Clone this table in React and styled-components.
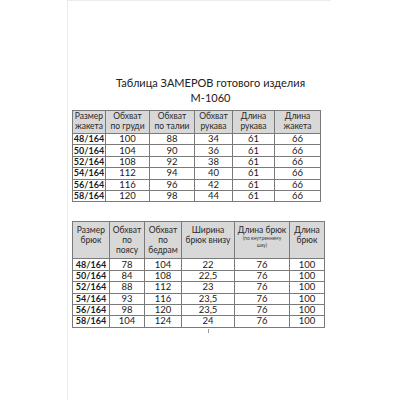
import styled, { createGlobalStyle } from "styled-components";

const GlobalStyle = createGlobalStyle`
  html, body {
    margin: 0;
    padding: 0;
    background: #ffffff;
  }
  body {
    font-family: Lato, "Open Sans", sans-serif;
    color: #1c1c1c;
  }
`;

const Page = styled.div`
  box-sizing: border-box;
  margin-left: 67px;
  width: 264px;
  height: 400px;
  border-left: 1px solid #ececec;
  border-top: 1px solid #ececec;
  padding: 74px 0 0 4px;
`;

const Title = styled.div`
  padding-left: 18px;
  text-align: center;
  font-size: 11px;
  line-height: 15px;
  color: #202020;
`;

const Table = styled.table`
  border-collapse: collapse;
  table-layout: fixed;
  width: ${(p) => p.$width}px;
  margin-top: ${(p) => p.$top}px;
  border: 1px solid #6e6e6e;
`;

const HeadCell = styled.th`
  background: #d8d8d8;
  border: 1px solid #7a7a7a;
  font-weight: normal;
  font-size: 8.5px;
  line-height: ${(p) => p.$lh || 10}px;
  height: ${(p) => p.$h}px;
  padding: ${(p) => p.$pt || 0}px 0 0;
  vertical-align: top;
  text-align: center;
  color: #2a2a2a;
  overflow: hidden;
`;

const Small = styled.div`
  font-size: 5px;
  line-height: 7px;
  color: #444;
`;

const Cell = styled.td`
  border: 1px solid #7a7a7a;
  height: ${(p) => p.$h}px;
  padding: 0;
  font-size: ${(p) => (p.$bold ? 9 : 9.5)}px;
  line-height: 10px;
  text-align: center;
  font-weight: ${(p) => (p.$bold ? 700 : 400)};
  color: #1a1a1a;
`;

const Tick = styled.div`
  width: 1px;
  height: 4px;
  background: #9a9a9a;
  margin: 1px 0 0 136px;
`;

const jacketCols = [33, 44, 45, 38, 42, 46];
const jacketRows = [
  ["48/164", "100", "88", "34", "61", "66"],
  ["50/164", "104", "90", "36", "61", "66"],
  ["52/164", "108", "92", "38", "61", "66"],
  ["54/164", "112", "94", "40", "61", "66"],
  ["56/164", "116", "96", "42", "61", "66"],
  ["58/164", "120", "98", "44", "61", "66"],
];

const pantsCols = [37, 35, 37, 53, 55, 35];
const pantsRows = [
  ["48/164", "78", "104", "22", "76", "100"],
  ["50/164", "84", "108", "22,5", "76", "100"],
  ["52/164", "88", "112", "23", "76", "100"],
  ["54/164", "93", "116", "23,5", "76", "100"],
  ["56/164", "98", "120", "23,5", "76", "100"],
  ["58/164", "104", "124", "24", "76", "100"],
];

export default function App() {
  return (
    <>
      <GlobalStyle />
      <Page>
        <Title>
          Таблица ЗАМЕРОВ готового изделия
          <br />
          М-1060
        </Title>

        <Table $width={248} $top={5}>
          <colgroup>
            {jacketCols.map((w, i) => (
              <col key={i} style={{ width: w }} />
            ))}
          </colgroup>
          <thead>
            <tr>
              <HeadCell $h={21} $pt={1} $lh={9.5}>Размер<br />жакета</HeadCell>
              <HeadCell $h={21} $pt={1} $lh={9.5}>Обхват<br />по груди</HeadCell>
              <HeadCell $h={21} $pt={1} $lh={9.5}>Обхват<br />по талии</HeadCell>
              <HeadCell $h={21} $pt={1} $lh={9.5}>Обхват<br />рукава</HeadCell>
              <HeadCell $h={21} $pt={1} $lh={9.5}>Длина<br />рукава</HeadCell>
              <HeadCell $h={21} $pt={1} $lh={9.5}>Длина<br />жакета</HeadCell>
            </tr>
          </thead>
          <tbody>
            {jacketRows.map((r) => (
              <tr key={r[0]}>
                {r.map((v, i) => (
                  <Cell key={i} $h={10.4} $bold={i === 0}>{v}</Cell>
                ))}
              </tr>
            ))}
          </tbody>
        </Table>

        <Table $width={252} $top={19}>
          <colgroup>
            {pantsCols.map((w, i) => (
              <col key={i} style={{ width: w }} />
            ))}
          </colgroup>
          <thead>
            <tr>
              <HeadCell $h={33} $pt={3}>Размер<br />брюк</HeadCell>
              <HeadCell $h={33} $pt={3}>Обхват<br />по<br />поясу</HeadCell>
              <HeadCell $h={33} $pt={3}>Обхват<br />по<br />бедрам</HeadCell>
              <HeadCell $h={33} $pt={3}>Ширина<br />брюк внизу</HeadCell>
              <HeadCell $h={33} $pt={3}>
                Длина брюк
                <Small>(по внутреннему<br />шву)</Small>
              </HeadCell>
              <HeadCell $h={33} $pt={3}>Длина<br />брюк</HeadCell>
            </tr>
          </thead>
          <tbody>
            {pantsRows.map((r) => (
              <tr key={r[0]}>
                {r.map((v, i) => (
                  <Cell key={i} $h={10.4} $bold={i === 0}>{v}</Cell>
                ))}
              </tr>
            ))}
          </tbody>
        </Table>
        <Tick />
      </Page>
    </>
  );
}
